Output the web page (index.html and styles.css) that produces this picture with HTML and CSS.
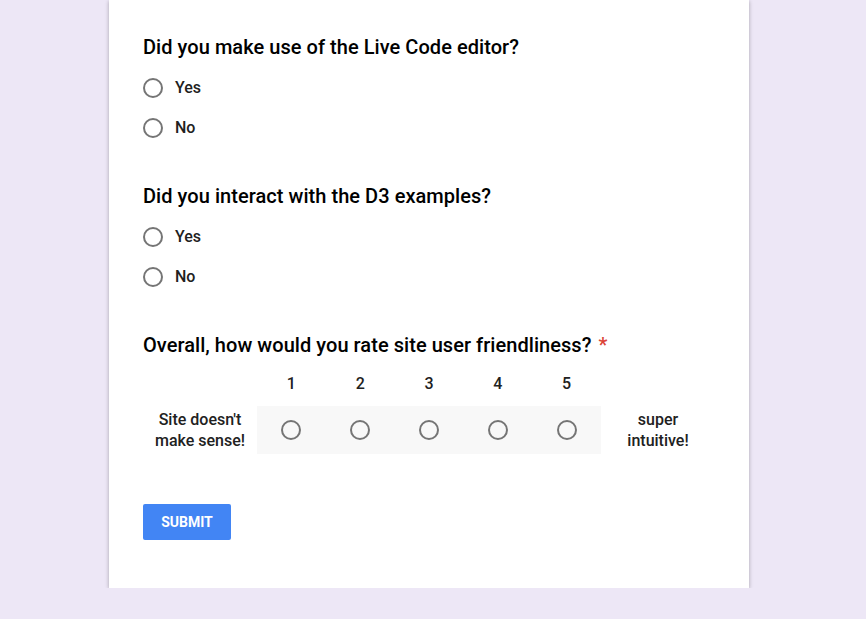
FILE: index.html
```html
<!DOCTYPE html>
<html>
<head>
<meta charset="utf-8">
<link rel="stylesheet" href="styles.css">
</head>
<body>
<div class="card">
  <div class="question">
    <div class="title">Did you make use of the Live Code editor?</div>
    <label class="option"><span class="radio"></span><span class="opt-text">Yes</span></label>
    <label class="option"><span class="radio"></span><span class="opt-text">No</span></label>
  </div>
  <div class="question">
    <div class="title">Did you interact with the D3 examples?</div>
    <label class="option"><span class="radio"></span><span class="opt-text">Yes</span></label>
    <label class="option"><span class="radio"></span><span class="opt-text">No</span></label>
  </div>
  <div class="question">
    <div class="title">Overall, how would you rate site user friendliness? <span class="req">*</span></div>
    <div class="scale">
      <div class="scale-head">
        <span class="side"></span>
        <div class="nums"><span>1</span><span>2</span><span>3</span><span>4</span><span>5</span></div>
        <span class="side"></span>
      </div>
      <div class="scale-row">
        <span class="side side-left">Site doesn't make sense!</span>
        <div class="nums radios">
          <span><i class="radio"></i></span><span><i class="radio"></i></span><span><i class="radio"></i></span><span><i class="radio"></i></span><span><i class="radio"></i></span>
        </div>
        <span class="side side-right">super intuitive!</span>
      </div>
    </div>
  </div>
  <button class="submit">SUBMIT</button>
</div>
</body>
</html>
```

FILE: styles.css
```css
html, body {
  margin: 0;
  padding: 0;
  background: #ede7f6;
  font-family: Roboto, "Noto Sans", sans-serif;
}
.card {
  width: 640px;
  margin-left: 109px;
  box-sizing: border-box;
  background: #fff;
  padding: 35px 34px 48px 34px;
  box-shadow: 0 1px 4px rgba(0,0,0,0.3);
}
.question {
  margin-bottom: 37px;
}
.title {
  font-size: 20px;
  line-height: 24px;
  font-weight: 500;
  letter-spacing: 0.05px;
  color: #000;
  margin-bottom: 8px;
}
.req {
  color: #db4437;
  margin-left: 2px;
}
.option {
  display: flex;
  align-items: center;
  height: 40px;
  padding-top: 1px;
  box-sizing: border-box;
}
.radio {
  display: inline-block;
  width: 20px;
  height: 20px;
  box-sizing: border-box;
  border: 2px solid #757575;
  border-radius: 50%;
}
.opt-text {
  margin-left: 12px;
  font-size: 16px;
  font-weight: 500;
  color: #212121;
}
.scale {
  margin-top: 14px;
}
.scale-head, .scale-row {
  display: flex;
  align-items: center;
}
.scale-head {
  height: 24px;
  margin-bottom: 11px;
}
.side {
  width: 114px;
  box-sizing: border-box;
  text-align: center;
  font-size: 16px;
  line-height: 21px;
  font-weight: 500;
  color: #212121;
}
.side-left {
  padding: 0 6px;
}
.side-right {
  padding: 0 10px;
}
.nums {
  width: 344px;
  display: flex;
}
.nums span {
  flex: 1;
  text-align: center;
  font-size: 16px;
  font-weight: 500;
  color: #212121;
}
.radios {
  height: 48px;
  background: #f8f8f8;
  align-items: center;
}
.radios span {
  display: flex;
  justify-content: center;
}
.radios .radio {
  display: block;
}
.submit {
  display: block;
  margin-top: 50px;
  width: 88px;
  height: 36px;
  border: none;
  border-radius: 2px;
  background: #4285f4;
  color: #fff;
  font-family: Roboto, sans-serif;
  font-weight: 700;
  font-size: 14px;
  padding: 0;
}
```
